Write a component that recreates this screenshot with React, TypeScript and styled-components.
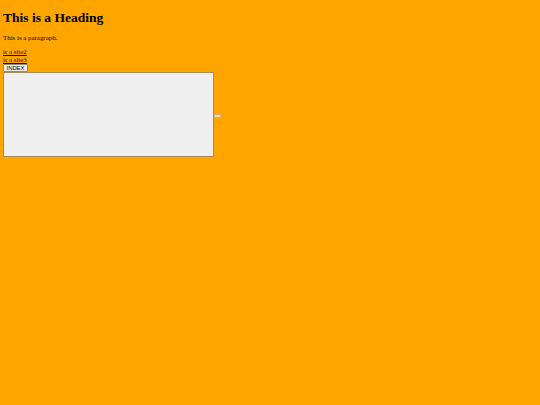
import React, {FC} from 'react';
import styled, {createGlobalStyle} from "styled-components";

const GlobalStyle = createGlobalStyle`
  html, body {
    margin: 0;
    background: #ffa500;
  }
  body {
    padding: 0 3px;
    font-family: "Liberation Serif", "Times New Roman", serif;
    color: #000;
  }
`;

const App: FC = () => {
    return (
        <>
            <GlobalStyle/>
            <Page>
                <Heading>This is a Heading</Heading>
                <Paragraph>This is a paragraph.</Paragraph>
                <SiteLink href="#">ir a site2</SiteLink>
                <br/>
                <SiteLink href="#">ir a site3</SiteLink>
                <IndexButton>INDEX</IndexButton>
                <Row>
                    <Frame/>
                    <Handle/>
                </Row>
            </Page>
        </>
    );
};

const Page = styled.div`
  font-size: 6.9px;
  line-height: 7.7px;
`

const Heading = styled.h1`
  font-size: 13.5px;
  line-height: 15.5px;
  font-weight: 700;
  margin: 0 0 8px;
  padding-top: 10px;
`

const Paragraph = styled.p`
  margin: 0 0 7px;
`

const SiteLink = styled.a`
  color: #1f1206;
  text-decoration: underline;
`

const IndexButton = styled.button`
  font-family: "Liberation Sans", Arial, sans-serif;
  font-size: 5.8px;
  line-height: 6.4px;
  height: 8.6px;
  padding: 0 2.6px;
  margin: 0;
  background: #efefef;
  color: #000;
  border: 1px solid #8a8a8a;
  border-radius: 1px;
  display: block;
`

const Row = styled.div`
  display: flex;
  align-items: center;
`

const Frame = styled.div`
  width: 209px;
  height: 83px;
  background: #efefef;
  border: 1px solid #a8895a;
`

const Handle = styled.div`
  width: 5px;
  height: 2px;
  margin-top: 3px;
  background: #f4dca8;
  border: 0.5px solid #d9b070;
`

export default App;
